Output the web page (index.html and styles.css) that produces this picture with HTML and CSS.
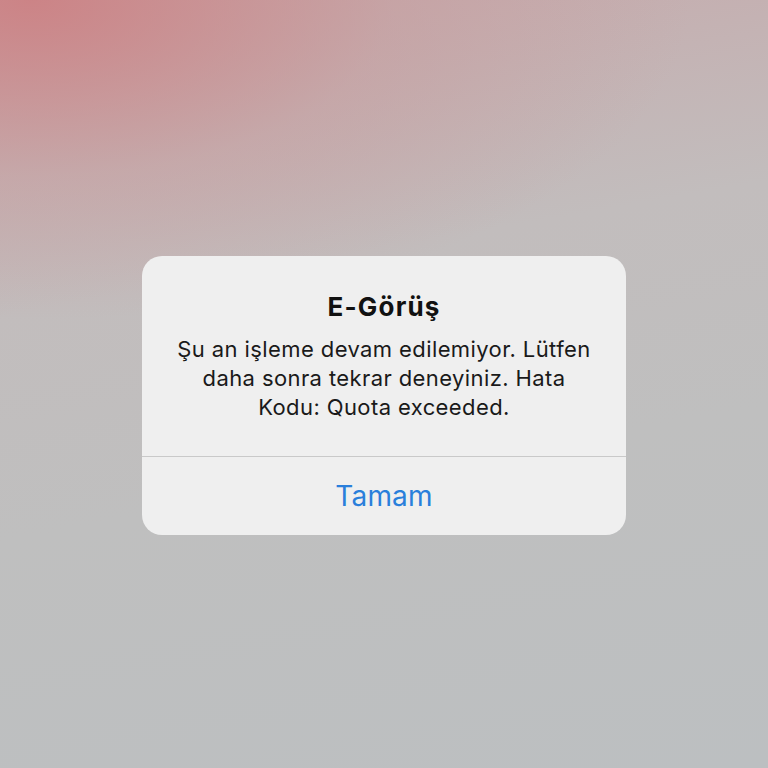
FILE: index.html
```html
<!DOCTYPE html>
<html lang="tr">
<head>
<meta charset="utf-8">
<link rel="stylesheet" href="styles.css">
</head>
<body>
<div class="screen">
  <div class="alert">
    <div class="alert-body">
      <h1 class="alert-title">E-Görüş</h1>
      <p class="alert-message">Şu an işleme devam edilemiyor. Lütfen daha sonra tekrar deneyiniz. Hata Kodu: Quota exceeded.</p>
    </div>
    <div class="alert-actions">
      <button class="alert-button">Tamam</button>
    </div>
  </div>
</div>
</body>
</html>
```
FILE: styles.css
```css
html, body {
  margin: 0;
  padding: 0;
}
body {
  width: 768px;
  height: 768px;
  overflow: hidden;
  font-family: Inter, "Noto Sans", sans-serif;
}
.screen {
  width: 768px;
  height: 768px;
  box-sizing: border-box;
  padding-top: 256px;
  background:
    radial-gradient(ellipse 660px 320px at 30px 0px, rgba(205,125,128,0.85), rgba(200,150,152,0.4) 55%, rgba(192,192,192,0) 100%),
    linear-gradient(170deg, #c6a8aa 0%, #c2bdbd 35%, #bfbfbf 60%, #bcbfc1 100%);
}
.alert {
  width: 484px;
  margin: 0 auto;
  background: #efefef;
  border-radius: 20px;
  overflow: hidden;
}
.alert-body {
  padding: 35px 30px 0;
  height: 201px;
  box-sizing: border-box;
  text-align: center;
  border-bottom: 1px solid #c9c9c9;
}
.alert-title {
  margin: 0;
  font-size: 26px;
  line-height: 32px;
  font-weight: 700;
  letter-spacing: 1.2px;
  color: #111;
}
.alert-message {
  margin: 12px 0 0;
  font-size: 22px;
  line-height: 29px;
  font-weight: 400;
  letter-spacing: 0.4px;
  color: #1a1a1a;
}
.alert-actions {
  height: 78px;
  display: flex;
  align-items: center;
  justify-content: center;
}
.alert-button {
  border: none;
  background: none;
  padding: 0;
  font-family: inherit;
  font-size: 28px;
  letter-spacing: 0.2px;
  color: #2a7fdb;
}
```
